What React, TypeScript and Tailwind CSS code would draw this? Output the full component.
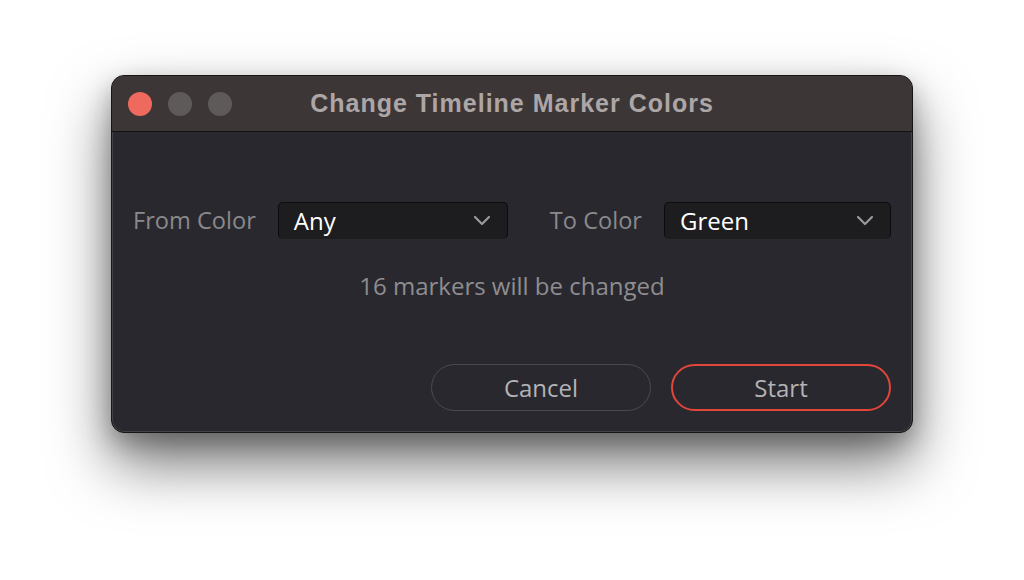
import React from "react";

function Chevron() {
  return (
    <svg width="18" height="11" viewBox="0 0 18 11" fill="none">
      <path d="M2 2 L9 9 L16 2" stroke="#9a9a9e" strokeWidth="2.2" strokeLinecap="round" strokeLinejoin="round" />
    </svg>
  );
}

function Dropdown({ value, width }: { value: string; width: string }) {
  return (
    <div
      className={`${width} h-[37px] flex items-center justify-between pl-[15px] pr-[16px] bg-[#1d1d1f] rounded-[5px] border border-[#0c0c0d] border-b-[#1d1d1f]`}
    >
      <span className="text-[24px] text-white leading-none pt-[1px]">{value}</span>
      <Chevron />
    </div>
  );
}

export default function App() {
  return (
    <div
      className="w-[1024px] h-[580px] bg-white pt-[75px] pl-[111px]"
      style={{ fontFamily: '"Open Sans", "Noto Sans", sans-serif' }}
    >
      <div className="w-[802px] h-[358px] rounded-[13px] border border-[#161616] bg-[#29282e] overflow-hidden shadow-[0_30px_60px_rgba(0,0,0,0.55),0_10px_25px_rgba(0,0,0,0.25),inset_0_0_0_1px_rgba(255,255,255,0.12)] flex flex-col">
        <div className="h-[56px] bg-[#3d3637] border-b border-[#141414] flex items-center relative">
          <div className="flex items-center gap-[16px] pl-[16px]">
            <div className="w-[24px] h-[24px] rounded-full bg-[#ee6a5e]" />
            <div className="w-[24px] h-[24px] rounded-full bg-[#5f5a5a]" />
            <div className="w-[24px] h-[24px] rounded-full bg-[#5f5a5a]" />
          </div>
          <div
            className="absolute inset-0 flex items-center justify-center text-[#aca6a6] text-[25px] tracking-[1px] font-bold"
            style={{ fontFamily: '"Liberation Sans", Arial, sans-serif' }}
          >
            Change Timeline Marker Colors
          </div>
        </div>
        <div className="flex flex-col px-[21px]">
          <div className="mt-[70px] flex items-center">
            <span className="text-[23.6px] leading-none text-[#8a898c] whitespace-nowrap shrink-0">From Color</span>
            <div className="ml-[22px] shrink-0">
              <Dropdown value="Any" width="w-[230px]" />
            </div>
            <span className="text-[23.6px] leading-none text-[#8a898c] ml-[42px] whitespace-nowrap shrink-0">To Color</span>
            <div className="ml-[22px] shrink-0">
              <Dropdown value="Green" width="w-[227px]" />
            </div>
          </div>
          <div className="mt-[32px] text-center text-[24px] text-[#8e8d90] leading-[30px]">
            16 markers will be changed
          </div>
          <div className="mt-[63px] flex justify-end gap-[20px]">
            <button className="w-[220px] h-[47px] rounded-full border border-[#4a4a50] text-[24px] text-[#b4b3b6] flex items-center justify-center">
              Cancel
            </button>
            <button className="w-[220px] h-[47px] rounded-full border-2 border-[#e2453a] text-[24px] text-[#b4b3b6] flex items-center justify-center">
              Start
            </button>
          </div>
        </div>
      </div>
    </div>
  );
}
